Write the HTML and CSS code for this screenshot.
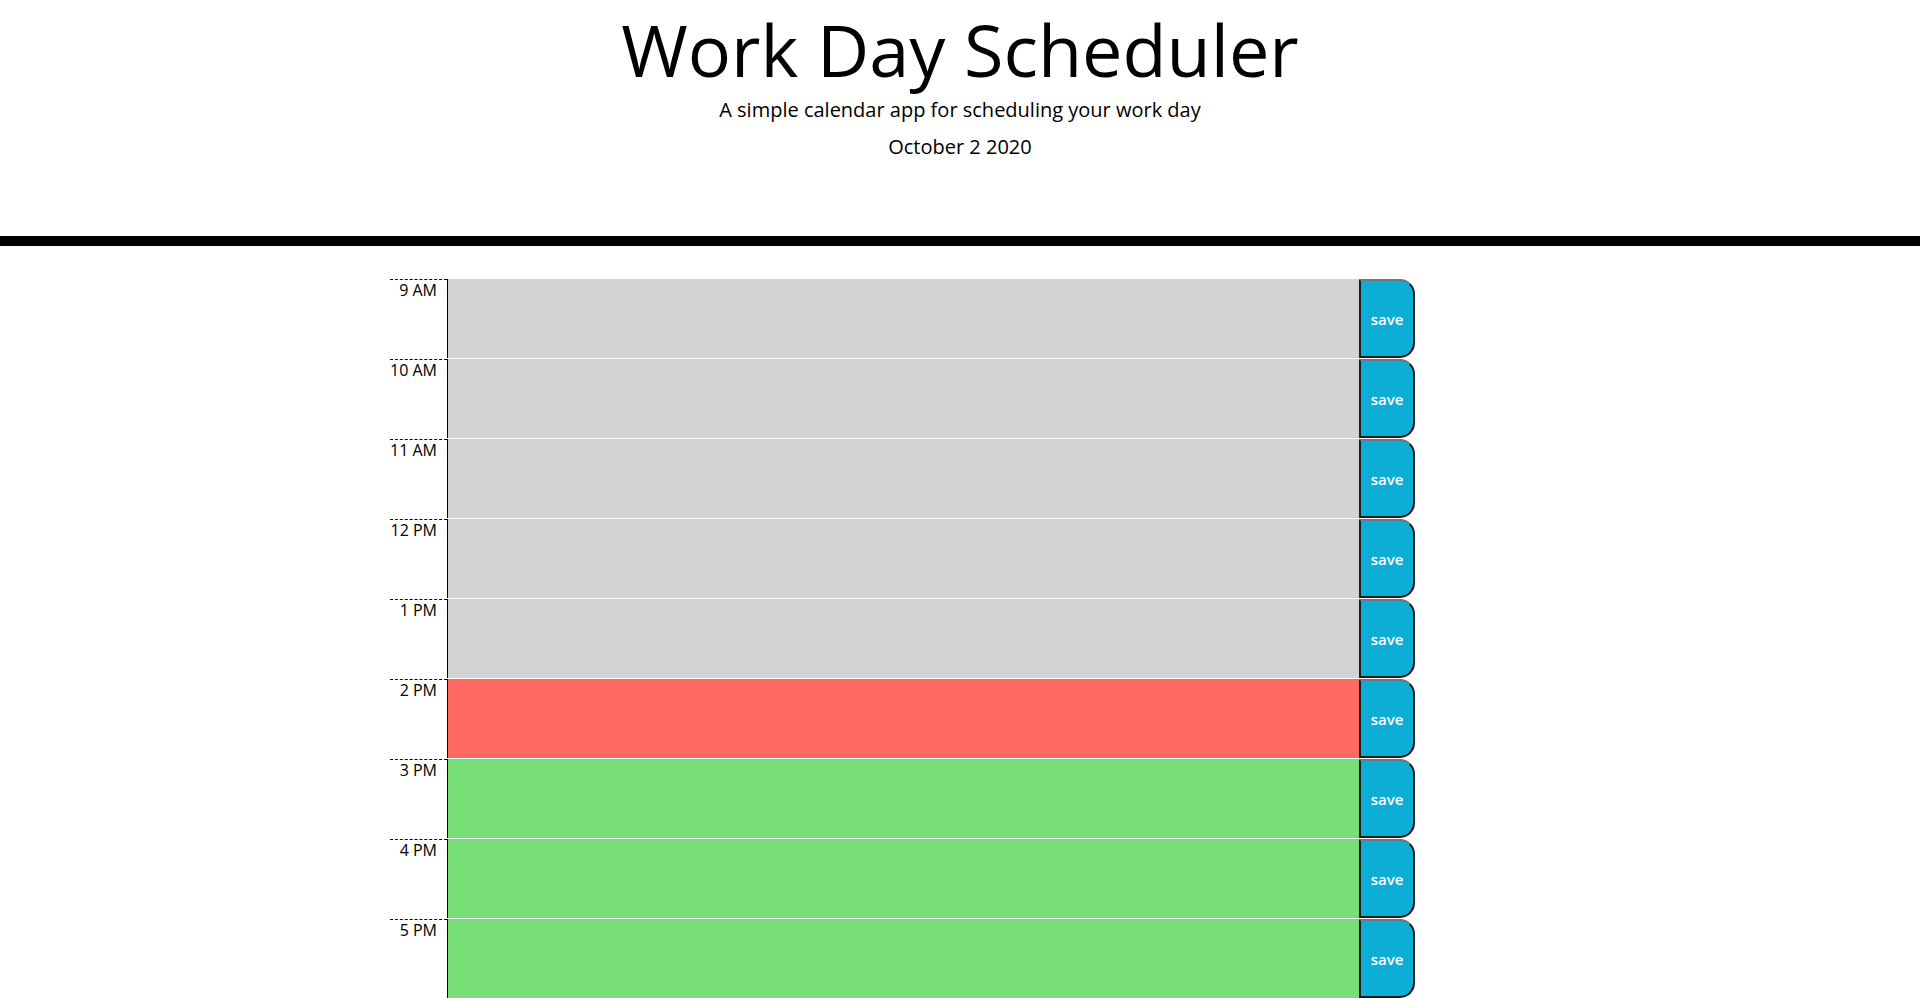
FILE: index.html
```html
<!DOCTYPE html>
<html lang="en">
<head>
<meta charset="utf-8">
<title>Work Day Scheduler</title>
<link rel="stylesheet" href="styles.css">
</head>
<body>
<header class="jumbotron">
  <h1 class="title">Work Day Scheduler</h1>
  <p class="lead">A simple calendar app for scheduling your work day</p>
  <p class="current-day">October 2 2020</p>
</header>
<main class="container">
  <div class="row"><div class="hour">9 AM</div><textarea class="description past"></textarea><button class="save-btn">save</button></div>
  <div class="row"><div class="hour">10 AM</div><textarea class="description past"></textarea><button class="save-btn">save</button></div>
  <div class="row"><div class="hour">11 AM</div><textarea class="description past"></textarea><button class="save-btn">save</button></div>
  <div class="row"><div class="hour">12 PM</div><textarea class="description past"></textarea><button class="save-btn">save</button></div>
  <div class="row"><div class="hour">1 PM</div><textarea class="description past"></textarea><button class="save-btn">save</button></div>
  <div class="row"><div class="hour">2 PM</div><textarea class="description present"></textarea><button class="save-btn">save</button></div>
  <div class="row"><div class="hour">3 PM</div><textarea class="description future"></textarea><button class="save-btn">save</button></div>
  <div class="row"><div class="hour">4 PM</div><textarea class="description future"></textarea><button class="save-btn">save</button></div>
  <div class="row"><div class="hour">5 PM</div><textarea class="description future"></textarea><button class="save-btn">save</button></div>
</main>
</body>
</html>
```

FILE: styles.css
```css
* {
  box-sizing: border-box;
}

body {
  margin: 0;
  font-family: "Open Sans", "Liberation Sans", sans-serif;
  font-size: 16px;
  line-height: 1;
  color: #000;
  background: #fff;
  overflow: hidden;
}

.jumbotron {
  text-align: center;
  border-bottom: 10px solid #000;
  padding: 13px 16px 0;
  height: 246px;
  margin-bottom: 32px;
}

.title {
  margin: 0;
  font-size: 72px;
  font-weight: 400;
  line-height: 1;
}

.lead {
  margin: 10px 0 0;
  font-size: 20px;
  font-weight: 400;
  line-height: 1.5;
}

.current-day {
  margin: 7px 0 0;
  font-size: 20px;
  font-weight: 400;
  line-height: 1.5;
}

.container {
  width: 1140px;
  margin: 0 auto;
}

.row {
  display: flex;
  width: 1025px;
  height: 80px;
  border-top: 1px solid #fff;
}

.hour {
  width: 57px;
  flex: none;
  text-align: right;
  padding: 2px 10px 0 0;
  border-top: 1px dashed #000;
  background: #fff;
  font-size: 16px;
}

.description {
  flex: 1;
  resize: none;
  border: none;
  border-left: 1px solid #000;
  padding: 10px;
  margin: 0;
  font-family: inherit;
  color: #fff;
  outline: none;
}

.past {
  background: #d3d3d3;
}

.present {
  background: #ff6961;
}

.future {
  background: #77dd77;
}

.save-btn {
  width: 56px;
  flex: none;
  height: 79px;
  margin: 0;
  padding: 0;
  background: #0caed5;
  color: #fff;
  font-family: inherit;
  font-size: 15px;
  font-weight: 600;
  border: 2px solid #1c1c1c;
  border-top-color: #767676;
  border-top-right-radius: 15px;
  border-bottom-right-radius: 15px;
}
```
